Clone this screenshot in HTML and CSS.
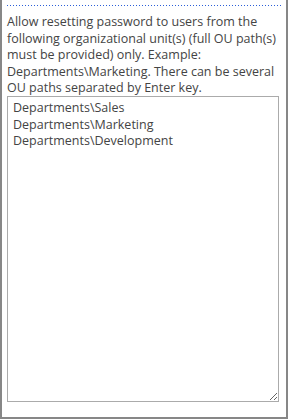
FILE: index.html
```html
<!DOCTYPE html>
<html lang="en">
<head>
  <meta charset="UTF-8">
  <title>OU restriction</title>
  <link rel="stylesheet" href="styles.css">
</head>
<body>
  <div class="panel">
    <div class="divider"></div>
    <p class="description">Allow resetting password to users from the following organizational unit(s) (full OU path(s) must be provided) only. Example: Departments\Marketing. There can be several OU paths separated by Enter key.</p>
    <textarea class="ou-paths">Departments\Sales
Departments\Marketing
Departments\Development</textarea>
  </div>
</body>
</html>
```

FILE: styles.css
```css
html, body {
  margin: 0;
  padding: 0;
  background: #fff;
}
.panel {
  box-sizing: border-box;
  width: 288px;
  height: 419px;
  border-left: 2px solid #878787;
  border-right: 2px solid #878787;
  border-bottom: 2px solid #878787;
  padding: 5px 8px 0 5px;
  font-family: "Open Sans", "Noto Sans", sans-serif;
  color: #444;
}
.divider {
  height: 1px;
  margin-right: -4px;
  background-image: linear-gradient(to right, #2b5fd9 1px, transparent 1px);
  background-size: 3px 1px;
}
.description {
  margin: 8px 0 0;
  font-size: 12.5px;
  line-height: 16.5px;
}
.ou-paths {
  display: block;
  box-sizing: border-box;
  width: 272px;
  height: 306px;
  margin-top: -0.5px;
  padding: 3px 5px;
  border: 1px solid #ababab;
  font-family: "Open Sans", "Noto Sans", sans-serif;
  font-size: 12.5px;
  line-height: 16.5px;
  color: #444;
  resize: both;
}
```
